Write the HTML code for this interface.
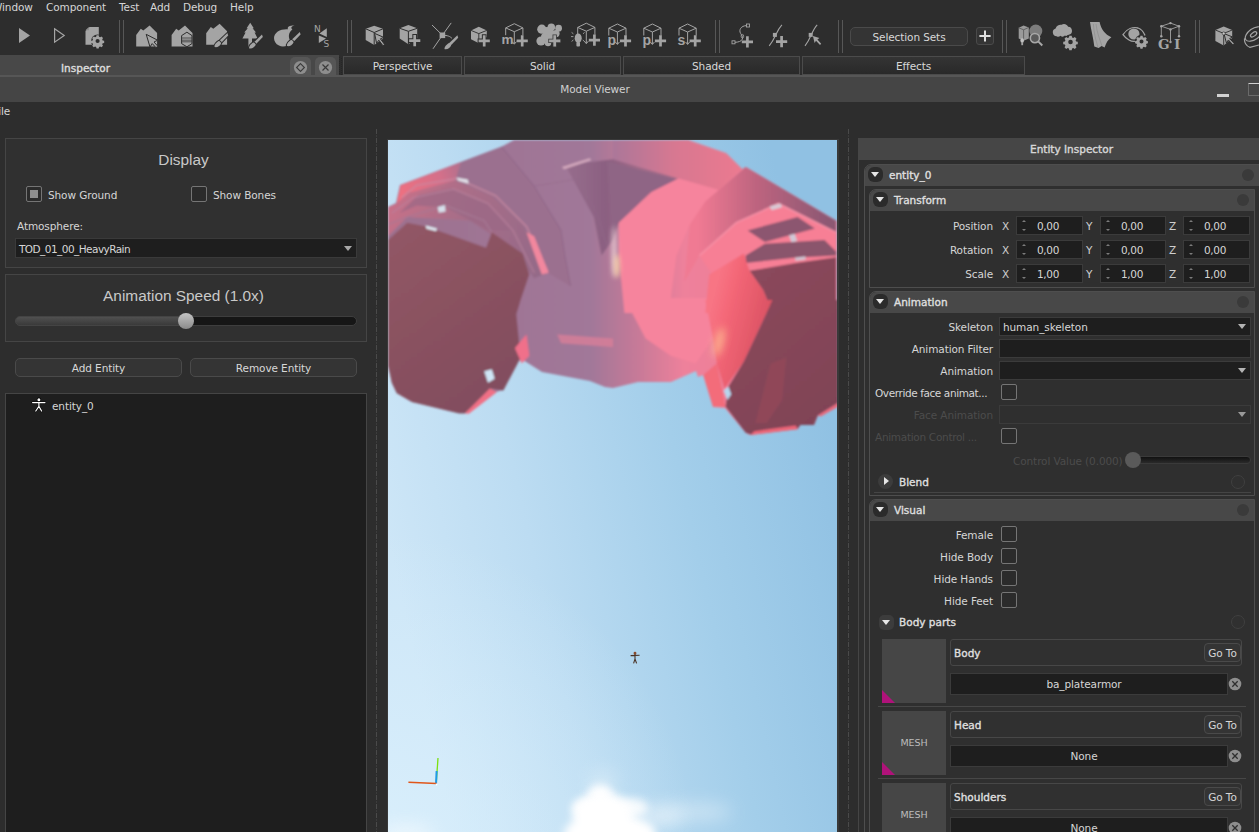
<!DOCTYPE html>
<html><head><meta charset="utf-8"><title>Model Viewer</title>
<style>
*{box-sizing:border-box;margin:0;padding:0}
html,body{width:1259px;height:832px;overflow:hidden;background:#2d2d2d}
body{position:relative;font-family:"DejaVu Sans","Liberation Sans",sans-serif;font-size:10.5px;letter-spacing:-0.1px;color:#d6d6d6;line-height:14px}
.a{position:absolute}
.t{position:absolute;white-space:nowrap;line-height:14px;height:14px}
.c{text-align:center}
.r{text-align:right}
.b{-webkit-text-stroke:0.4px currentColor;letter-spacing:0px}
.sep{position:absolute;top:20px;height:33px;width:5px;border-left:1px solid #575757;border-right:1px solid #575757}
.tab{position:absolute;top:56px;height:19px;border:1px solid #4b4b4b;background:linear-gradient(#343434,#292929);text-align:center;line-height:19px;color:#d8d8d8}
.gb{position:absolute;border:1px solid #454545;background:#303030}
.cb{position:absolute;width:16px;height:16px;border:1px solid #757575;border-radius:2px;background:#2b2b2b}
.btn{position:absolute;border:1px solid #4a4a4a;border-radius:5px;background:#343434;text-align:center;color:#d8d8d8}
.ico{position:absolute;overflow:visible}
</style></head><body>

<!-- ===== menu bar ===== -->
<div id="menubar" class="a" style="left:0;top:0;width:1259px;height:16px">
<span class="t" style="left:-8px;top:0">Window</span>
<span class="t" style="left:46px;top:0">Component</span>
<span class="t" style="left:119px;top:0">Test</span>
<span class="t" style="left:150px;top:0">Add</span>
<span class="t" style="left:183px;top:0">Debug</span>
<span class="t" style="left:230px;top:0">Help</span>
</div>

<!-- ===== toolbar ===== -->
<div id="toolbar" class="a" style="left:0;top:16px;width:1259px;height:39px">
<div class="sep" style="left:119px;top:4px"></div>
<div class="sep" style="left:347px;top:4px"></div>
<div class="sep" style="left:715px;top:4px"></div>
<div class="sep" style="left:838px;top:4px"></div>
<div class="sep" style="left:1002px;top:4px"></div>
<div class="sep" style="left:1195px;top:4px"></div>
<div class="btn" style="left:850px;top:11px;width:118px;height:19px;line-height:19px">Selection Sets</div>
<div class="btn" style="left:976px;top:11px;width:18px;height:18px;border-radius:3px"></div>
<svg class="a" style="left:0;top:-16px" width="1259" height="56" viewBox="0 0 1259 56" fill="#a4a4a4" stroke="none" font-family="'DejaVu Sans','Liberation Sans',sans-serif">
<defs>
<g id="house"><polygon points="0,21 0,9.5 4.6,3.3 7.1,5 13.4,0 20.9,7.5 20.9,21"/></g>
<g id="brush"><path d="M11.8 -0.6 L12.6 2 L4.9 10 L2.9 8 Z"/><path d="M-3.8 0 C-3.4 -2 1.6 -2.6 3.4 -1.6 C4 -0.6 4 0.6 3.4 1.6 C1.6 2.6 -2 2.4 -3.8 0 Z" transform="translate(1.9 10.9) rotate(-42)"/></g>
<g id="plus"><path d="M-1.35 -5.6h2.7v4.25h4.25v2.7h-4.25v4.25h-2.7v-4.25h-4.25v-2.7h4.25z"/></g>
<g id="wcube" fill="none" stroke="#a4a4a4" stroke-width="1"><path d="M0 0 L8.6 4.2 L0 8 L-8.6 4.2 Z"/><path d="M-8.6 4.2 V11.5 M8.6 4.2 V11.5 M0 8 V20"/><path d="M-2 18 L0 20.5 L2 18" /></g>
<g id="gear"><path fill-rule="evenodd" d="M-1.2 -6.3h2.4l.4 1.7 1.2.5 1.5-.9 1.7 1.7-.9 1.5.5 1.2 1.7.4v2.4l-1.7.4-.5 1.2.9 1.5-1.7 1.7-1.5-.9-1.2.5-.4 1.7h-2.4l-.4-1.7-1.2-.5-1.5.9-1.7-1.7.9-1.5-.5-1.2-1.7-.4v-2.4l1.7-.4.5-1.2-.9-1.5 1.7-1.7 1.5.9 1.2-.5zM0-2.3a2.3 2.3 0 1 0 0 4.6 2.3 2.3 0 0 0 0-4.6z"/></g>
<g id="cursor"><path d="M0 0 L9 3.6 L5.6 5.2 L9.6 9.4 L8.2 10.8 L4.2 6.6 L2.6 10 Z"/></g>
</defs>
<!-- play -->
<polygon points="19,28 30,35.5 19,43"/>
<polygon points="54.6,28.8 64.2,35.5 54.6,42.2" fill="none" stroke="#a4a4a4" stroke-width="1.2"/>
<!-- file gear -->
<path d="M89.5 27 H98.8 V36 L93 41 L93 44.8 H85.5 V31 Z"/>
<path d="M85.5 30.2 L88.8 27 V30.2 Z" fill="#8a8a8a"/>
<circle cx="97.6" cy="41" r="6.6" fill="#2d2d2d"/>
<use href="#gear" transform="translate(97.6 41) scale(.9)"/>
<!-- house + cursor -->
<use href="#house" x="136.2" y="25.4"/>
<path d="M146.2 34.3 L157.6 40.2 L154 42 L158 46.4 L156 47.6 L152.2 43.6 L150 47 Z" fill="#a4a4a4" stroke="#2d2d2d" stroke-width="1"/>
<!-- house + hex -->
<use href="#house" x="171.6" y="25.4"/>
<polygon points="186.9,32.2 192,35.6 192,43.6 186.9,46.8 181.6,43.6 181.6,35.6" fill="#a4a4a4" stroke="#2d2d2d" stroke-width="1"/>
<path d="M181.6 38h10.4M181.6 40.2h10.4M181.6 41.8h10.4" stroke="#3a3a3a" stroke-width=".8"/>
<!-- house + brush -->
<use href="#house" x="206.2" y="23.8"/>
<g stroke="#2d2d2d" stroke-width="2" paint-order="stroke"><use href="#brush" x="215.6" y="33.6"/></g>
<!-- tree + brush -->
<path d="M250.2 22.8 L253.8 28.2 L252.6 28.2 L256 32.6 L254.6 32.6 L257.6 38.6 L252 38.6 L252 47 L248.4 47 L248.4 38.6 L242.4 38.6 L245.6 32.6 L244.2 32.6 L247.8 28.2 L246.6 28.2 Z"/>
<g stroke="#2d2d2d" stroke-width="2" paint-order="stroke"><use href="#brush" x="250.2" y="35"/></g>
<!-- blob + brush -->
<path d="M274 38 C274 32 281 28.6 288 29.2 C287 27 289 25.6 294.6 25.2 C291 26.4 290.6 27.6 292.4 29.6 C288 33 288 38 291 42 C289 46 283 47.6 279 45.6 C275.6 44 274 41 274 38 Z"/>
<g stroke="#2d2d2d" stroke-width="2" paint-order="stroke"><use href="#brush" x="288" y="32.6"/></g>
<!-- N/S -->
<text x="314" y="31.6" font-size="9" fill="#a4a4a4">N</text>
<polygon points="326.8,28.2 326.8,37 319.4,33.6"/>
<polygon points="318.8,35.4 318.8,43 326,38.4"/>
<text x="323.4" y="46.8" font-size="9" fill="#a4a4a4">S</text>
<!-- cube cursor -->
<polygon points="374.2,25.7 383,28.8 383,38.8 374.2,45 365.7,40 365.7,28.8"/>
<path d="M365.7 28.8 L374.2 32.5 L383 28.8 M374.2 32.5 V45" stroke="#2d2d2d" stroke-width="1" fill="none"/>
<g stroke="#2d2d2d" stroke-width="1"><path d="M374.6 33.4 L383.8 37.4 L380.4 38.8 L384.6 44.4 L383 45.8 L378.8 40.2 L376.6 43.4 Z"/></g>
<!-- cube plus -->
<polygon points="408.4,25 417.2,28.3 417.2,38 408.4,44.2 399.7,38.5 399.7,28.3"/>
<path d="M399.7 28.3 L408.4 31.3 L417.2 28.3 M408.4 31.3 V44.2" stroke="#2d2d2d" stroke-width="1" fill="none"/>
<g stroke="#2d2d2d" stroke-width="2" paint-order="stroke"><use href="#plus" x="414.7" y="40.6"/></g>
<!-- node brush -->
<path d="M442.4 35.2 L432 25 M442.4 35.2 L451.2 22.9 M442.4 35.2 L433 48.8 M442.4 35.2 C448 35.4 450 36.4 452 38.4" stroke="#a4a4a4" stroke-width="1" fill="none"/>
<rect x="439.6" y="32.5" width="5.6" height="5.6"/>
<use href="#brush" x="445.6" y="35.8"/>
<!-- small cube plus -->
<polygon points="478.8,26.7 486.8,30.4 486.8,37 478.8,43.3 471,39.2 471,30.4"/>
<path d="M471 30.4 L478.8 33.6 L486.8 30.4 M478.8 33.6 V43.3" stroke="#2d2d2d" stroke-width=".9" fill="none"/>
<g stroke="#2d2d2d" stroke-width="2" paint-order="stroke"><use href="#plus" x="484.2" y="40.8"/></g>
<!-- m + -->
<use href="#wcube" x="514.3" y="23.7"/>
<text x="501.6" y="43.8" font-size="13.5" font-weight="bold" font-family="'Liberation Sans',sans-serif" fill="#a4a4a4">m</text>
<use href="#plus" x="522.2" y="40.8"/>
<!-- splat -->
<g><circle cx="541.8" cy="29.2" r="4.6"/><circle cx="551.3" cy="27.2" r="3.8"/><circle cx="558.6" cy="28.2" r="3.4"/><circle cx="541" cy="41" r="4.6"/><circle cx="548" cy="43" r="3.2"/><circle cx="549" cy="35" r="6.4"/><circle cx="545" cy="37" r="4"/><circle cx="547" cy="31" r="4"/><circle cx="556" cy="33.6" r="3.6"/></g>
<g stroke="#3a3a3a" stroke-width="1.6" paint-order="stroke"><use href="#plus" x="554.7" y="40.8"/></g>
<!-- bulb + -->
<use href="#wcube" x="586.3" y="23.2"/>
<ellipse cx="578.2" cy="38.2" rx="3.5" ry="4.8"/><rect x="576.4" y="42" width="3.6" height="4.6" rx="1"/>
<path d="M571 36.6h2.4M571.6 32.4l1.8 1.4M571.6 41.4l1.8-1.4M584.6 32.4l-1.6 1.4M584.4 41.4l-1.6-1.4" stroke="#a4a4a4" stroke-width=".9"/>
<use href="#plus" x="594.4" y="40.2"/>
<!-- p + -->
<use href="#wcube" x="617.4" y="24"/>
<text x="607.4" y="44.6" font-size="14" font-weight="bold" font-family="'Liberation Sans',sans-serif" fill="#a4a4a4">p</text>
<use href="#plus" x="625.5" y="40.8"/>
<use href="#wcube" x="652.4" y="24"/>
<text x="642.4" y="44.6" font-size="14" font-weight="bold" font-family="'Liberation Sans',sans-serif" fill="#a4a4a4">p</text>
<use href="#plus" x="660.5" y="40.8"/>
<use href="#wcube" x="687.6" y="24"/>
<text x="677.4" y="44.6" font-size="14" font-weight="bold" font-family="'Liberation Sans',sans-serif" fill="#a4a4a4">s</text>
<use href="#plus" x="695.2" y="40.8"/>
<!-- curve + -->
<path d="M746.4 25.6 C741 25.8 738.6 30 740.6 33.4 C742 35.6 743 37 742.4 39 C741.6 41.4 738 42.2 735 42.3" stroke="#a4a4a4" stroke-width="1" fill="none"/>
<rect x="746.5" y="24" width="3" height="3" fill="none" stroke="#a4a4a4" stroke-width=".9"/>
<rect x="732" y="40.8" width="3" height="3" fill="none" stroke="#a4a4a4" stroke-width=".9"/>
<ellipse cx="742.4" cy="36.2" rx="1.3" ry="1.8" fill="none" stroke="#a4a4a4" stroke-width=".8"/>
<use href="#plus" x="747.4" y="41.8"/>
<!-- curve square + -->
<path d="M781.9 24.8 C776 31 776 38 769.2 45.8" stroke="#a4a4a4" stroke-width="1.1" fill="none"/>
<rect x="772.9" y="32.9" width="4" height="4"/>
<use href="#plus" x="781.6" y="41.7"/>
<!-- curve square cursor -->
<path d="M817.2 24.8 C811.4 31 811.4 38 805 45.8" stroke="#a4a4a4" stroke-width="1.1" fill="none"/>
<rect x="808.7" y="32.9" width="4" height="4"/>
<path d="M812.9 36 L819.4 38 L817.4 39.6 L821.2 43.8 L820 45 L816 40.8 L814.6 43 Z"/>
<!-- selection sets plus -->
<path d="M984 30.4h2v4.6h4.6v2h-4.6v4.6h-2v-4.6h-4.6v-2h4.6z" fill="#e0e0e0"/>
<!-- search world -->
<polygon points="1023.6,25.4 1028.8,27.4 1028.8,38.6 1023.6,40.8 1018.7,38.6 1018.7,27.8" fill="#9a9a9a"/>
<path d="M1018.7 27.8 L1023.6 29.8 L1028.8 27.4 M1023.6 29.8 V40.8" stroke="#555" stroke-width=".8" fill="none"/>
<circle cx="1035.8" cy="31.1" r="6.5" fill="#7c7c7c"/>
<circle cx="1034.9" cy="38.1" r="4.6" fill="#5a5a5a" stroke="#a8a8a8" stroke-width="1.6"/>
<path d="M1038.4 41.6 L1042.3 45.5" stroke="#a8a8a8" stroke-width="2"/>
<ellipse cx="1022.2" cy="40.6" rx="1.8" ry="2.4" fill="#c0c0c0"/><rect x="1021.3" y="42.6" width="1.8" height="2.6" fill="#a4a4a4"/>
<!-- cloud gear -->
<path d="M1056.6 36.2 a4 4 0 0 1 -1 -7.8 a5 5 0 0 1 6 -3.6 a4.6 4.6 0 0 1 6.6 2 a4.2 4.2 0 0 1 0.8 8.2 a3 3 0 0 1 -4 .6 a3.4 3.4 0 0 1 -4.6 .2 a3 3 0 0 1 -3.8 .4z"/>
<circle cx="1070.5" cy="42" r="7.4" fill="#2d2d2d"/>
<use href="#gear" x="1070.5" y="42"/>
<!-- cloth -->
<path d="M1090 22 L1099.6 22 C1101 29 1105 34.4 1111.4 37.2 C1108 39.6 1106 43 1104.6 47.6 L1101.6 46 L1098.6 48 L1094.3 46.4 C1093.4 38 1091 30 1090 22 Z"/>
<path d="M1096 24 C1097 33 1100 40 1102 46 M1093.4 24 C1094 34 1096 41 1098 47" stroke="#8c8c8c" stroke-width=".7" fill="none"/>
<!-- eye gear -->
<path d="M1123 34.6 C1127 28.6 1133 26.6 1138 28 C1141 29 1143.4 31.6 1144.8 35 C1141 41 1134 43 1129 40 C1126.4 38.6 1124.4 36.6 1123 34.6 Z" fill="none" stroke="#a4a4a4" stroke-width="1.3"/>
<circle cx="1133.9" cy="34" r="5.6"/>
<circle cx="1141.5" cy="41.4" r="6.6" fill="#2d2d2d"/>
<use href="#gear" transform="translate(1141.5 41.4) scale(.88)"/>
<!-- GI -->
<g fill="none" stroke="#a4a4a4" stroke-width=".9"><path d="M1170.5 23.1 L1179 26.2 L1170.5 29.4 L1161.3 26.2 Z M1161.3 26.2 V36.3 M1179 26.2 V36.3 M1170.5 29.4 V42"/></g>
<g><circle cx="1170.5" cy="23.1" r="1.2"/><circle cx="1179" cy="26.2" r="1.2"/><circle cx="1161.3" cy="26.2" r="1.2"/><circle cx="1170.5" cy="29.4" r="1.2"/><circle cx="1161.3" cy="36.3" r="1.2"/><circle cx="1179" cy="36.3" r="1.2"/><circle cx="1170.5" cy="42" r="1.2"/></g>
<text x="1158" y="49.4" font-size="13.5" font-weight="bold" font-family="'DejaVu Serif','Liberation Serif',serif" fill="#a4a4a4" letter-spacing="4.4">GI</text>
<!-- cube cursor 2 -->
<polygon points="1223.7,26.6 1232.2,30 1232.2,38 1223.7,45.5 1215.4,40.9 1215.4,30"/>
<path d="M1215.4 30 L1223.7 33.4 L1232.2 30 M1223.7 33.4 V45.5" stroke="#2d2d2d" stroke-width=".9" fill="none"/>
<g stroke="#2d2d2d" stroke-width="1"><path d="M1224 33.6 L1232.6 37 L1229.6 38.6 L1234.2 43.4 L1232.8 44.8 L1228.4 40 L1226.4 43 Z"/></g>
<circle cx="1223.7" cy="33.4" r="1.5" fill="#c8c8c8" stroke="#2d2d2d" stroke-width=".6"/>
<!-- tape -->
<g fill="none" stroke="#a4a4a4" stroke-width="1.2"><ellipse cx="1254" cy="34" rx="10" ry="5.4" transform="rotate(-35 1254 34)"/><ellipse cx="1253.6" cy="34.4" rx="3.6" ry="1.8" transform="rotate(-35 1253.6 34.4)"/><path d="M1244.6 38.4 C1244 42 1246 46 1250 47.4 L1259 45"/></g>
</svg>

</div>

<!-- ===== dock/tab bars ===== -->
<div class="a" style="left:0;top:55px;width:1259px;height:47px;background:#454545"></div>
<div class="a" style="left:0;top:55px;width:339px;height:20px;background:#484848"></div>
<div class="a" style="left:339px;top:55px;width:920px;height:20px;background:#2d2d2d"></div>
<div class="a" style="left:0;top:75px;width:1259px;height:2px;background:#565656"></div>
<div class="a" style="left:290px;top:57px;width:21px;height:18px;background:#565656;border-radius:5px 5px 0 0"></div>
<div class="a" style="left:315px;top:57px;width:21px;height:18px;background:#565656;border-radius:5px 5px 0 0"></div>
<svg class="a" style="left:290px;top:57px" width="46" height="20" viewBox="0 0 46 20"><circle cx="10.5" cy="10.5" r="6.6" fill="#8e8e8e"/><path d="M10.5 6.6L14.4 10.5L10.5 14.4L6.6 10.5Z" fill="none" stroke="#3a3a3a" stroke-width="1.1"/><circle cx="35.5" cy="10.5" r="6.6" fill="#8e8e8e"/><path d="M32.5 7.5L38.5 13.5M38.5 7.5L32.5 13.5" stroke="#3a3a3a" stroke-width="1.2"/></svg>
<svg class="a" style="left:339px;top:57px" width="3" height="18" viewBox="0 0 3 18"><path d="M.5 0V18M2.5 1V18" stroke="#262626" stroke-width="1" stroke-dasharray="1 1"/></svg>
<div class="a" style="left:1217px;top:94px;width:12px;height:2.5px;background:#d2d2d2"></div>
<div class="a" style="left:1248px;top:83px;width:14px;height:13px;border:1px solid #6a6a6a;border-top:1px solid #cfcfcf;border-radius:1px"></div>
<div class="t b" style="left:61px;top:61px;color:#dcdcdc">Inspector</div>
<div class="tab" style="left:343px;width:119px">Perspective</div>
<div class="tab" style="left:464px;width:157px">Solid</div>
<div class="tab" style="left:623px;width:177px">Shaded</div>
<div class="tab" style="left:802px;width:223px">Effects</div>
<div class="t c" style="left:495px;width:200px;top:82px;color:#d0d0d0">Model Viewer</div>
<div class="t" style="left:-7px;top:104px">File</div>

<!-- ===== left panel ===== -->
<div id="left" class="a" style="left:0;top:102px;width:376px;height:730px">
<div class="gb" style="left:5px;top:36px;width:362px;height:130px"></div>
<div class="t c" style="left:2.5px;width:362px;top:51px;font-family:'Liberation Sans',sans-serif;font-size:15.4px;letter-spacing:0;color:#c9c9c9">Display</div>
<div class="cb" style="left:26px;top:84px"><div class="a" style="left:3px;top:3px;width:8px;height:8px;background:#8e8e8e"></div></div>
<div class="t" style="left:48px;top:86px">Show Ground</div>
<div class="cb" style="left:191px;top:84px"></div>
<div class="t" style="left:213px;top:86px">Show Bones</div>
<div class="t" style="left:17px;top:117px">Atmosphere:</div>
<div class="a" style="left:15px;top:136px;width:342px;height:20px;background:#1e1e1e;border:1px solid #3a3a3a"></div>
<div class="t" style="left:19px;top:140px;letter-spacing:-0.55px">TOD_01_00_HeavyRain</div>
<div class="a" style="left:344px;top:144px;width:0;height:0;border-left:4.5px solid transparent;border-right:4.5px solid transparent;border-top:5px solid #a8a8a8"></div>

<div class="gb" style="left:5px;top:172px;width:362px;height:68px"></div>
<div class="t c" style="left:2.5px;width:362px;top:187px;font-family:'Liberation Sans',sans-serif;font-size:15.4px;letter-spacing:0;color:#c9c9c9">Animation Speed (1.0x)</div>
<div class="a" style="left:15px;top:214px;width:342px;height:10px;border-radius:5px;background:#161616;border:1px solid #3e3e3e"></div>
<div class="a" style="left:15px;top:214px;width:172px;height:10px;border-radius:5px 0 0 5px;background:linear-gradient(#505050,#3a3a3a);border:1px solid #444"></div>
<div class="a" style="left:178px;top:211px;width:16px;height:16px;border-radius:8px;background:linear-gradient(#c4c4c4,#8a8a8a)"></div>

<div class="btn" style="left:15px;top:256px;width:167px;height:19px;line-height:19px">Add Entity</div>
<div class="btn" style="left:190px;top:256px;width:167px;height:19px;line-height:19px">Remove Entity</div>
<div class="a" style="left:5px;top:291px;width:362px;height:445px;background:#1e1e1e;border:1px solid #454545"></div>
<svg class="a" style="left:30px;top:295px" width="18" height="18" viewBox="30 397 18 18"><g stroke="#000" stroke-width="2.2" stroke-linecap="round" fill="none"><circle cx="38.9" cy="399.8" r="1.1"/><path d="M32.6 402.6H45M38.9 403V406.4L35.8 411M38.9 406.4L41.6 411"/></g><g stroke="#fff" stroke-width="1.2" stroke-linecap="round" fill="none"><circle cx="38.9" cy="399.8" r=".9" fill="#fff"/><path d="M32.6 402.6H45M38.9 403V406.4L35.8 411M38.9 406.4L41.6 411"/></g></svg>
<div class="t" style="left:52px;top:297px">entity_0</div>
</div>

<!-- ===== viewport ===== -->
<svg class="a" style="left:376px;top:129px" width="1" height="703" viewBox="0 0 1 703"><path d="M.5 0V703" stroke="#4a4a4a" stroke-width="1" stroke-dasharray="5 1.5 1 1.5"/></svg>
<svg class="a" style="left:848px;top:129px" width="1" height="703" viewBox="0 0 1 703"><path d="M.5 0V703" stroke="#4a4a4a" stroke-width="1" stroke-dasharray="5 1.5 1 1.5"/></svg>
<div class="a" style="left:386.5px;top:138.5px;width:452px;height:700px;background:#393939"></div>
<div id="vp" class="a" style="left:388px;top:140px;width:449px;height:692px;overflow:hidden">
<svg class="a" style="left:0;top:0" width="449" height="692" viewBox="0 0 449 692">
<defs>
<filter id="bl" x="-5%" y="-5%" width="110%" height="110%"><feGaussianBlur stdDeviation="0.9"/></filter>
<filter id="blf" x="-30%" y="-30%" width="160%" height="160%"><feGaussianBlur stdDeviation="0.35"/></filter>
<filter id="bl2" filterUnits="userSpaceOnUse" x="-40" y="-40" width="530" height="780"><feGaussianBlur stdDeviation="2.5"/></filter>
<filter id="bl3" filterUnits="userSpaceOnUse" x="-40" y="-40" width="530" height="780"><feGaussianBlur stdDeviation="4"/></filter>
<filter id="bl8" filterUnits="userSpaceOnUse" x="-40" y="-40" width="530" height="780"><feGaussianBlur stdDeviation="9"/></filter>
<filter id="bl16" filterUnits="userSpaceOnUse" x="-40" y="-40" width="530" height="780"><feGaussianBlur stdDeviation="18"/></filter>
<linearGradient id="gBase" gradientUnits="userSpaceOnUse" x1="0" y1="0" x2="449" y2="0"><stop offset="0" stop-color="#9d718f"/><stop offset=".45" stop-color="#a17899"/><stop offset=".56" stop-color="#c87a98"/><stop offset=".66" stop-color="#ee819b"/><stop offset="1" stop-color="#ee7a92"/></linearGradient>
<linearGradient id="gTop" gradientUnits="userSpaceOnUse" x1="225" y1="0" x2="350" y2="0"><stop offset="0" stop-color="#ab7799"/><stop offset=".5" stop-color="#d87891"/><stop offset="1" stop-color="#ea7a90"/></linearGradient>
<linearGradient id="gL" gradientUnits="userSpaceOnUse" x1="0" y1="90" x2="130" y2="270"><stop offset="0" stop-color="#925766"/><stop offset=".5" stop-color="#895160"/><stop offset="1" stop-color="#804d5e"/></linearGradient>
<linearGradient id="gLu" gradientUnits="userSpaceOnUse" x1="10" y1="50" x2="160" y2="130"><stop offset="0" stop-color="#c87088"/><stop offset=".35" stop-color="#aa6e88"/><stop offset="1" stop-color="#936a88"/></linearGradient>
<linearGradient id="gEdge" gradientUnits="userSpaceOnUse" x1="10" y1="50" x2="80" y2="25"><stop offset="0" stop-color="#ee6f80"/><stop offset=".6" stop-color="#d4708a"/><stop offset="1" stop-color="#a8708e"/></linearGradient>
<linearGradient id="gR" gradientUnits="userSpaceOnUse" x1="340" y1="160" x2="449" y2="290"><stop offset="0" stop-color="#8a485b"/><stop offset="1" stop-color="#7f4356"/></linearGradient>
<linearGradient id="gRu" gradientUnits="userSpaceOnUse" x1="310" y1="60" x2="440" y2="60"><stop offset="0" stop-color="#f07a93"/><stop offset=".45" stop-color="#bd647f"/><stop offset="1" stop-color="#8d5873"/></linearGradient>
<linearGradient id="gCor" gradientUnits="userSpaceOnUse" x1="315" y1="200" x2="375" y2="215"><stop offset="0" stop-color="#f87484"/><stop offset=".3" stop-color="#f36676"/><stop offset="1" stop-color="#d95162"/></linearGradient>
<linearGradient id="gV" gradientUnits="userSpaceOnUse" x1="170" y1="0" x2="250" y2="0"><stop offset="0" stop-color="#99708f"/><stop offset=".6" stop-color="#8b6081"/><stop offset="1" stop-color="#a06a88"/></linearGradient>
<radialGradient id="gSky2" gradientUnits="userSpaceOnUse" cx="-20" cy="720" r="330"><stop offset="0" stop-color="#dcf1fd" stop-opacity=".8"/><stop offset="1" stop-color="#dcf1fd" stop-opacity="0"/></radialGradient>
<linearGradient id="gSky" gradientUnits="userSpaceOnUse" x1="0" y1="400" x2="449" y2="300"><stop offset="0" stop-color="#cde6f7"/><stop offset=".3" stop-color="#bcdcf2"/><stop offset=".65" stop-color="#a3ceea"/><stop offset="1" stop-color="#90c1e3"/></linearGradient>
</defs>
<rect width="449" height="692" fill="url(#gSky)"/>
<rect width="449" height="692" fill="url(#gSky2)"/>
<g filter="url(#bl)">
<polygon fill="url(#gBase)" points="126,0 113,7 73,22 12,45 8,63 0,67 0,225 4,243 9,253 24,262 71,273 77,273 108,252 115,250 127,221 135,220 154,232 202,241 217,247 225,248 250,242 283,242 308,231 310,237 315,235 325,267 337,268 358,293 362,295 410,289 412,285 426,285 430,275 449,263 449,81 358,27 354,29 338,13 300,0"/>
<polygon points="12.5,45.2 73.1,22.1 86.5,32.7 67.3,41.3 21.2,52.9 8.7,63.5" fill="url(#gEdge)" />
<polygon points="73.1,22.1 113.5,6.7 146.2,46.2 173.1,90.4 176.9,115.4 182.7,146.2 159.6,132.7 134.6,84.6 103.8,55.8 67.3,40.4" fill="#9b708f" />
<polygon points="225.0,0.0 300.0,0.0 338.5,13.5 353.8,28.8 330.8,50.0 290.4,38.5 225.0,19.2" fill="url(#gTop)" />
<polygon points="176.9,25.0 225.0,19.2 290.4,38.5 263.5,51.9 230.8,82.7 225.0,100.0 213.5,115.4 205.8,76.9" fill="url(#gV)" />
<polygon points="219.2,21.2 288.5,39.4 261.5,52.9 230.8,82.7 223.1,92.3" fill="#8f6585" />
<polygon points="263.5,51.9 290.4,38.5 330.8,50.0 317.3,61.5 301.9,84.6 288.5,115.4 280.8,173.1 236.5,173.1 230.8,115.4 230.8,82.7" fill="#f6849d" />
<polygon points="236.2,158.1 340.4,158.1 325.0,198.5 307.7,223.5 282.7,215.8 257.7,198.5" fill="#f6849d" />
<polygon points="0.0,67.3 8.7,63.5 21.2,52.9 67.3,40.4 103.8,55.8 134.6,84.6 159.6,132.7 146.2,138.5 123.1,107.7 82.7,80.8 19.2,76.9 0.0,96.2" fill="url(#gLu)" />
<polygon points="11.5,73.1 30.8,54.8 63.5,48.1 100.0,63.5 123.1,90.4 100.0,90.4 57.7,67.3 28.8,65.4" fill="#9a6886" opacity=".7"/>
<polygon points="0.0,100.0 19.2,82.7 38.5,86.5 98.1,107.7 103.8,92.3 134.6,113.5 141.3,134.6 132.7,160.0 128.8,173.1 0.0,173.1" fill="url(#gL)" />
<polygon points="0.0,158.1 129.2,158.1 128.5,175.4 132.7,217.7 115.4,250.4 101.9,248.5 76.9,273.5 71.2,273.5 24.0,261.9 8.7,253.3 3.8,242.7 0.0,225.4" fill="url(#gL)" />
<polygon points="76.9,273.5 101.9,248.5 108.7,252.3 80.8,273.8" fill="#f07085" />
<polygon points="126.9,208.1 138.5,194.6 141.3,215.8 133.7,223.5" fill="#f0708a" />
<polygon points="357.7,26.9 448.1,80.8 448.1,92.3 390.4,63.5 348.1,82.7 311.5,115.4 296.2,142.3 301.9,84.6 317.3,61.5 330.8,50.0" fill="url(#gRu)" />
<polygon points="348.1,82.7 390.4,63.5 448.1,92.3 448.1,173.1 359.6,173.1 323.1,132.7 311.5,115.4" fill="#f77f95" />
<polygon points="359.6,90.4 409.6,76.9 426.9,88.5 376.9,101.9" fill="#8c5670" />
<polygon points="357.7,115.4 376.9,103.8 436.5,100.0 448.1,111.5 448.1,115.4 405.8,117.7 357.7,123.1" fill="#8a546c" />
<polygon points="361.5,130.8 407.7,123.1 448.1,117.3 448.1,173.1 384.6,173.1 375.0,150.0" fill="url(#gR)" />
<polygon points="321.2,134.6 355.8,113.5 361.5,130.8 375.0,150.0 384.6,173.1 317.3,173.1" fill="url(#gCor)" />
<polygon points="317.3,160.0 384.6,160.0 355.8,221.5 336.5,248.5 328.8,223.5 325.0,198.5" fill="url(#gCor)" />
<polygon points="315.4,235.0 328.8,223.5 337.5,266.7 325.0,266.7" fill="#f36c7a" />
<polygon points="384.6,160.0 450.0,160.0 450.0,262.9 429.8,275.4 426.0,285.0 412.5,285.0 409.6,288.8 362.5,294.6 357.7,292.7 337.5,266.7 340.4,246.5 355.8,221.5" fill="url(#gR)" />
<polygon points="382.7,223.5 398.1,217.7 394.2,260.0 378.8,283.1 367.3,283.1" fill="#96485a" opacity=".7"/>
<polygon points="362.5,295.0 409.6,289.2 407.7,285.4 366.3,291.2" fill="#ee6678" />
<polygon points="429.8,275.4 450.0,262.9 450.0,266.7 432.7,276.5" fill="#ee6678" />
<polygon points="169.2,194.6 225.0,198.5 225.0,207.1 173.1,203.3" fill="#d87e98" opacity=".8"/>
<g fill="none" stroke-linejoin="round">
<path d="M13.5 57.7 L28.8 45.2 L69.2 38.5 L107.7 55.8 L138.5 86.5 L159.6 130.8" stroke="#c98aa0" stroke-width="1.6" opacity="0.8"/>
<path d="M3.8 73.1 L25.0 57.7 L65.4 49.0 L100.0 63.5 L125.0 90.4 L146.2 132.7" stroke="#b9829c" stroke-width="1.4" opacity="0.7"/>
<path d="M0.0 84.6 L19.2 76.9 L57.7 65.4 L96.2 80.8 L103.8 92.3" stroke="#a87a96" stroke-width="1.6" opacity="0.7"/>
<path d="M113.5 6.7 L146.2 46.2 L173.1 90.4 L176.9 115.4 L182.7 146.2" stroke="#8d6787" stroke-width="1.2" opacity="0.7"/>
<path d="M146.2 46.2 L192.3 38.5 L211.5 80.8 L219.2 107.7" stroke="#93698a" stroke-width="1.0" opacity="0.6"/>
<path d="M311.5 115.4 L348.1 82.7 L390.4 63.5 L448.1 92.3" stroke="#fa9aae" stroke-width="1.4" opacity="0.8"/>
</g>
<polygon points="49.6,66.9 56.9,65.0 57.7,71.5 50.8,72.7" fill="#d5dfea" />
<polygon points="37.5,85.6 49.0,88.5 48.1,91.3 38.5,88.8" fill="#dfeaf3" />
<polygon points="68.3,37.5 79.8,39.4 80.8,43.8 70.2,40.8" fill="#e0dfe8" />
<polygon points="174.0,26.9 201.9,18.3 203.1,20.2 176.0,29.2" fill="#d4a9bd" />
<polygon points="138.5,92.3 146.2,96.2 160.6,132.7 153.8,134.6" fill="#f2879e" />
<polygon points="96.2,231.2 103.8,229.2 106.7,238.8 100.0,242.7" fill="#cfe6f6" />
<polygon points="335.6,250.4 340.4,246.5 343.3,254.2 339.4,260.0" fill="#b5d6ee" />
<polygon points="381.7,66.3 392.3,63.5 394.2,67.3 383.7,70.2" fill="#d8c8d4" />
<polygon points="401.0,95.2 406.7,93.8 409.2,101.0 403.5,102.3" fill="#d0c8d6" />
<polygon points="406.7,117.7 417.3,116.3 417.9,119.6 407.7,120.8" fill="#cfc3d0" />
</g>
<ellipse cx="226" cy="112" rx="2.2" ry="26" fill="#f3dde0" opacity=".85" filter="url(#bl2)"/>
<ellipse cx="229" cy="126" rx="2.5" ry="12" fill="#ffd9a8" opacity=".9" filter="url(#bl2)"/>
<ellipse cx="331" cy="202" rx="4" ry="15" fill="#ffc896" opacity=".85" filter="url(#bl3)" transform="rotate(14 331 202)"/>
<g fill="#fff">
<ellipse cx="215" cy="676" rx="30" ry="24" filter="url(#bl3)"/>
<ellipse cx="222" cy="694" rx="46" ry="20" filter="url(#bl3)"/>
<ellipse cx="212" cy="654" rx="12" ry="10" opacity=".95" filter="url(#bl3)"/>
<ellipse cx="196" cy="668" rx="12" ry="9" opacity=".9" filter="url(#bl3)"/>
<ellipse cx="244" cy="668" rx="16" ry="10" opacity=".85" filter="url(#bl3)"/>
<ellipse cx="272" cy="676" rx="22" ry="9" opacity=".6" filter="url(#bl8)"/>
<ellipse cx="310" cy="672" rx="34" ry="7" opacity=".45" filter="url(#bl8)"/>
<ellipse cx="215" cy="640" rx="14" ry="8" opacity=".35" filter="url(#bl8)"/>
<ellipse cx="18" cy="694" rx="28" ry="8" opacity=".6" filter="url(#bl8)"/>
</g>
<g stroke-linecap="butt" fill="none"><path d="M48.2 644 L50 618" stroke="#7be010" stroke-width="1.3"/><path d="M48 644.5 L48.6 631" stroke="#1f9be8" stroke-width="2"/><path d="M48.6 643.6 L20.4 642.2" stroke="#e0561a" stroke-width="1.5"/><circle cx="48.4" cy="644.6" r="1" fill="#fff"/></g>
<g stroke="#4a3326" stroke-width="1.1" fill="none" filter="url(#blf)"><path d="M242.6 515.6 L251.6 515.2 M247 513.6 V519 L245.6 523.4 M247 519 L248.6 523.4"/><circle cx="247" cy="513.2" r=".9" fill="#8a4a2a" stroke="#8a4a2a"/></g>
</svg>
</div>

<!-- ===== right panel ===== -->
<div id="right" class="a" style="left:858px;top:138px;width:401px;height:694px;background:#2e2e2e">
<div class="a" style="left:0;top:0;width:1px;height:694px;background:#454545"></div>
<div class="a" style="left:0;top:0;width:401px;height:22px;background:#464646"></div>
<div class="t c b" style="left:0;width:427px;top:4px">Entity Inspector</div>
<div class="a" style="left:6px;top:26px;width:400px;height:700px;background:#2f2f2f;border:1px solid #4e4e4e;border-radius:7px 0 0 0"></div>
<div class="a" style="left:7px;top:27px;width:398px;height:21px;background:#484848;border-radius:6px 0 0 0"></div>
<div class="a" style="left:10px;top:29px;width:15px;height:15px;background:#2b2b2b;border-radius:6px"></div>
<div class="a" style="left:13.0px;top:34.0px;width:0;height:0;border-left:4.5px solid transparent;border-right:4.5px solid transparent;border-top:5px solid #e6e6e6"></div>
<div class="t b" style="left:31px;top:30px;color:#dedede">entity_0</div>
<div class="a" style="left:384px;top:30.5px;width:12px;height:12px;border-radius:6px;background:#3a3a3a"></div>
<div class="a" style="left:11px;top:51px;width:386px;height:99px;background:#2f2f2f;border:1px solid #4e4e4e;border-radius:7px 0 0 0"></div>
<div class="a" style="left:12px;top:52px;width:384px;height:21px;background:#484848;border-radius:6px 0 0 0"></div>
<div class="a" style="left:15px;top:54px;width:15px;height:15px;background:#2b2b2b;border-radius:6px"></div>
<div class="a" style="left:18.0px;top:59.0px;width:0;height:0;border-left:4.5px solid transparent;border-right:4.5px solid transparent;border-top:5px solid #e6e6e6"></div>
<div class="t b" style="left:36px;top:55px;color:#dedede">Transform</div>
<div class="a" style="left:379px;top:55.5px;width:12px;height:12px;border-radius:6px;background:#3a3a3a"></div>
<div class="t r" style="left:-65px;width:200px;top:80.5px;">Position</div>
<div class="t " style="left:144px;top:80.5px;color:#cfcfcf">X</div>
<div class="a" style="left:158px;top:78px;width:67px;height:19px;background:#1e1e1e;border:1px solid #3b3b3b"></div>
<div class="a" style="left:163.5px;top:81.5px;width:0;height:0;border-left:2.5px solid transparent;border-right:2.5px solid transparent;border-bottom:2.5px solid #7c7c7c"></div>
<div class="a" style="left:163.5px;top:90.5px;width:0;height:0;border-left:2.5px solid transparent;border-right:2.5px solid transparent;border-top:2.5px solid #7c7c7c"></div>
<div class="t " style="left:179px;top:80.5px;letter-spacing:-0.35px">0,00</div>
<div class="t " style="left:228px;top:80.5px;color:#cfcfcf">Y</div>
<div class="a" style="left:242px;top:78px;width:66px;height:19px;background:#1e1e1e;border:1px solid #3b3b3b"></div>
<div class="a" style="left:247.5px;top:81.5px;width:0;height:0;border-left:2.5px solid transparent;border-right:2.5px solid transparent;border-bottom:2.5px solid #7c7c7c"></div>
<div class="a" style="left:247.5px;top:90.5px;width:0;height:0;border-left:2.5px solid transparent;border-right:2.5px solid transparent;border-top:2.5px solid #7c7c7c"></div>
<div class="t " style="left:263px;top:80.5px;letter-spacing:-0.35px">0,00</div>
<div class="t " style="left:311px;top:80.5px;color:#cfcfcf">Z</div>
<div class="a" style="left:325px;top:78px;width:67px;height:19px;background:#1e1e1e;border:1px solid #3b3b3b"></div>
<div class="a" style="left:330.5px;top:81.5px;width:0;height:0;border-left:2.5px solid transparent;border-right:2.5px solid transparent;border-bottom:2.5px solid #7c7c7c"></div>
<div class="a" style="left:330.5px;top:90.5px;width:0;height:0;border-left:2.5px solid transparent;border-right:2.5px solid transparent;border-top:2.5px solid #7c7c7c"></div>
<div class="t " style="left:346px;top:80.5px;letter-spacing:-0.35px">0,00</div>
<div class="t r" style="left:-65px;width:200px;top:104.5px;">Rotation</div>
<div class="t " style="left:144px;top:104.5px;color:#cfcfcf">X</div>
<div class="a" style="left:158px;top:102px;width:67px;height:19px;background:#1e1e1e;border:1px solid #3b3b3b"></div>
<div class="a" style="left:163.5px;top:105.5px;width:0;height:0;border-left:2.5px solid transparent;border-right:2.5px solid transparent;border-bottom:2.5px solid #7c7c7c"></div>
<div class="a" style="left:163.5px;top:114.5px;width:0;height:0;border-left:2.5px solid transparent;border-right:2.5px solid transparent;border-top:2.5px solid #7c7c7c"></div>
<div class="t " style="left:179px;top:104.5px;letter-spacing:-0.35px">0,00</div>
<div class="t " style="left:228px;top:104.5px;color:#cfcfcf">Y</div>
<div class="a" style="left:242px;top:102px;width:66px;height:19px;background:#1e1e1e;border:1px solid #3b3b3b"></div>
<div class="a" style="left:247.5px;top:105.5px;width:0;height:0;border-left:2.5px solid transparent;border-right:2.5px solid transparent;border-bottom:2.5px solid #7c7c7c"></div>
<div class="a" style="left:247.5px;top:114.5px;width:0;height:0;border-left:2.5px solid transparent;border-right:2.5px solid transparent;border-top:2.5px solid #7c7c7c"></div>
<div class="t " style="left:263px;top:104.5px;letter-spacing:-0.35px">0,00</div>
<div class="t " style="left:311px;top:104.5px;color:#cfcfcf">Z</div>
<div class="a" style="left:325px;top:102px;width:67px;height:19px;background:#1e1e1e;border:1px solid #3b3b3b"></div>
<div class="a" style="left:330.5px;top:105.5px;width:0;height:0;border-left:2.5px solid transparent;border-right:2.5px solid transparent;border-bottom:2.5px solid #7c7c7c"></div>
<div class="a" style="left:330.5px;top:114.5px;width:0;height:0;border-left:2.5px solid transparent;border-right:2.5px solid transparent;border-top:2.5px solid #7c7c7c"></div>
<div class="t " style="left:346px;top:104.5px;letter-spacing:-0.35px">0,00</div>
<div class="t r" style="left:-65px;width:200px;top:128.5px;">Scale</div>
<div class="t " style="left:144px;top:128.5px;color:#cfcfcf">X</div>
<div class="a" style="left:158px;top:126px;width:67px;height:19px;background:#1e1e1e;border:1px solid #3b3b3b"></div>
<div class="a" style="left:163.5px;top:129.5px;width:0;height:0;border-left:2.5px solid transparent;border-right:2.5px solid transparent;border-bottom:2.5px solid #7c7c7c"></div>
<div class="a" style="left:163.5px;top:138.5px;width:0;height:0;border-left:2.5px solid transparent;border-right:2.5px solid transparent;border-top:2.5px solid #7c7c7c"></div>
<div class="t " style="left:179px;top:128.5px;letter-spacing:-0.35px">1,00</div>
<div class="t " style="left:228px;top:128.5px;color:#cfcfcf">Y</div>
<div class="a" style="left:242px;top:126px;width:66px;height:19px;background:#1e1e1e;border:1px solid #3b3b3b"></div>
<div class="a" style="left:247.5px;top:129.5px;width:0;height:0;border-left:2.5px solid transparent;border-right:2.5px solid transparent;border-bottom:2.5px solid #7c7c7c"></div>
<div class="a" style="left:247.5px;top:138.5px;width:0;height:0;border-left:2.5px solid transparent;border-right:2.5px solid transparent;border-top:2.5px solid #7c7c7c"></div>
<div class="t " style="left:263px;top:128.5px;letter-spacing:-0.35px">1,00</div>
<div class="t " style="left:311px;top:128.5px;color:#cfcfcf">Z</div>
<div class="a" style="left:325px;top:126px;width:67px;height:19px;background:#1e1e1e;border:1px solid #3b3b3b"></div>
<div class="a" style="left:330.5px;top:129.5px;width:0;height:0;border-left:2.5px solid transparent;border-right:2.5px solid transparent;border-bottom:2.5px solid #7c7c7c"></div>
<div class="a" style="left:330.5px;top:138.5px;width:0;height:0;border-left:2.5px solid transparent;border-right:2.5px solid transparent;border-top:2.5px solid #7c7c7c"></div>
<div class="t " style="left:346px;top:128.5px;letter-spacing:-0.35px">1,00</div>
<div class="a" style="left:11px;top:153px;width:386px;height:205px;background:#2f2f2f;border:1px solid #4e4e4e;border-radius:7px 0 0 0"></div>
<div class="a" style="left:12px;top:154px;width:384px;height:21px;background:#484848;border-radius:6px 0 0 0"></div>
<div class="a" style="left:15px;top:156px;width:15px;height:15px;background:#2b2b2b;border-radius:6px"></div>
<div class="a" style="left:18.0px;top:161.0px;width:0;height:0;border-left:4.5px solid transparent;border-right:4.5px solid transparent;border-top:5px solid #e6e6e6"></div>
<div class="t b" style="left:36px;top:157px;color:#dedede">Animation</div>
<div class="a" style="left:379px;top:157.5px;width:12px;height:12px;border-radius:6px;background:#3a3a3a"></div>
<div class="t r" style="left:-65px;width:200px;top:182px;">Skeleton</div>
<div class="a" style="left:141px;top:179px;width:252px;height:19px;background:#1e1e1e;border:1px solid #3b3b3b"></div>
<div class="t " style="left:145px;top:182px;">human_skeleton</div>
<div class="a" style="left:380.0px;top:186.0px;width:0;height:0;border-left:4.5px solid transparent;border-right:4.5px solid transparent;border-top:5px solid #b4b4b4"></div>
<div class="t r" style="left:-65px;width:200px;top:204px;">Animation Filter</div>
<div class="a" style="left:141px;top:201px;width:252px;height:19px;background:#1e1e1e;border:1px solid #3b3b3b"></div>
<div class="t r" style="left:-65px;width:200px;top:226px;">Animation</div>
<div class="a" style="left:141px;top:223px;width:252px;height:19px;background:#1e1e1e;border:1px solid #3b3b3b"></div>
<div class="a" style="left:380.0px;top:230.0px;width:0;height:0;border-left:4.5px solid transparent;border-right:4.5px solid transparent;border-top:5px solid #b4b4b4"></div>
<div class="t " style="left:17px;top:248px;letter-spacing:-0.4px">Override face animat...</div>
<div class="cb" style="left:143px;top:246px"></div>
<div class="t r" style="left:-65px;width:200px;top:270px;color:#4c4c4c">Face Animation</div>
<div class="a" style="left:141px;top:267px;width:252px;height:19px;background:#2f2f2f;border:1px solid #3b3b3b"></div>
<div class="a" style="left:380.0px;top:274.0px;width:0;height:0;border-left:4.5px solid transparent;border-right:4.5px solid transparent;border-top:5px solid #9a9a9a"></div>
<div class="t " style="left:17px;top:292px;color:#4c4c4c;letter-spacing:-0.3px">Animation Control ...</div>
<div class="cb" style="left:143px;top:290px"></div>
<div class="t " style="left:155px;top:315.5px;color:#4c4c4c">Control Value (0.000)</div>
<div class="a" style="left:275px;top:318px;width:118px;height:8px;background:linear-gradient(#111,#2a2a2a);border-radius:4px;border:1px solid #3a3a3a"></div>
<div class="a" style="left:267px;top:313.5px;width:16px;height:16px;border-radius:8px;background:#5a5a5a"></div>
<div class="a" style="left:20.0px;top:336.0px;width:15.0px;height:15.0px;border-radius:7.5px;background:#3c3c3c"></div>
<div class="a" style="left:26.0px;top:339.0px;width:0;height:0;border-top:4.5px solid transparent;border-bottom:4.5px solid transparent;border-left:5px solid #e6e6e6"></div>
<div class="t b" style="left:41px;top:337px;color:#dedede">Blend</div>
<div class="a" style="left:373px;top:336.5px;width:14px;height:14px;border-radius:7px;border:1px solid #404040;background:#303030"></div>
<div class="a" style="left:16px;top:354px;width:377px;height:1px;background:#454545"></div>
<div class="a" style="left:11px;top:361px;width:386px;height:400px;background:#2f2f2f;border:1px solid #4e4e4e;border-radius:7px 0 0 0"></div>
<div class="a" style="left:12px;top:362px;width:384px;height:21px;background:#484848;border-radius:6px 0 0 0"></div>
<div class="a" style="left:15px;top:364px;width:15px;height:15px;background:#2b2b2b;border-radius:6px"></div>
<div class="a" style="left:18.0px;top:369.0px;width:0;height:0;border-left:4.5px solid transparent;border-right:4.5px solid transparent;border-top:5px solid #e6e6e6"></div>
<div class="t b" style="left:36px;top:365px;color:#dedede">Visual</div>
<div class="a" style="left:379px;top:365.5px;width:12px;height:12px;border-radius:6px;background:#3a3a3a"></div>
<div class="t r" style="left:-65px;width:200px;top:390px;">Female</div>
<div class="cb" style="left:143px;top:388px"></div>
<div class="t r" style="left:-65px;width:200px;top:412px;">Hide Body</div>
<div class="cb" style="left:143px;top:410px"></div>
<div class="t r" style="left:-65px;width:200px;top:434px;">Hide Hands</div>
<div class="cb" style="left:143px;top:432px"></div>
<div class="t r" style="left:-65px;width:200px;top:456px;">Hide Feet</div>
<div class="cb" style="left:143px;top:454px"></div>
<div class="a" style="left:20.5px;top:476.5px;width:15px;height:15px;background:#3c3c3c;border-radius:5px"></div>
<div class="a" style="left:23.5px;top:481.5px;width:0;height:0;border-left:4.5px solid transparent;border-right:4.5px solid transparent;border-top:5px solid #e6e6e6"></div>
<div class="t b" style="left:41px;top:477px;color:#dedede">Body parts</div>
<div class="a" style="left:373px;top:477px;width:14px;height:14px;border-radius:7px;border:1px solid #404040;background:#303030"></div>
<div class="a" style="left:24px;top:501px;width:64px;height:64px;background:#464646"></div>
<div class="a" style="left:24px;top:552px;width:0;height:0;border-bottom:13px solid #b0127a;border-right:13px solid transparent"></div>
<div class="a" style="left:92px;top:501px;width:292px;height:27px;border:1px solid #474747;border-radius:3px;background:#303030"></div>
<div class="t b" style="left:96px;top:507.5px;color:#dedede">Body</div>
<div class="a" style="left:346px;top:505px;width:37px;height:19px;border:1px solid #4a4a4a;border-radius:4px;background:#343434"></div>
<div class="t c" style="left:346px;top:507.5px;width:37px;">Go To</div>
<div class="a" style="left:92px;top:535px;width:278px;height:22px;background:#1e1e1e;border:1px solid #3b3b3b"></div>
<div class="t c" style="left:92px;top:539px;width:268px;">ba_platearmor</div>
<svg class="a" style="left:370px;top:539px" width="14" height="14" viewBox="0 0 14 14"><circle cx="7" cy="7" r="6.3" fill="#8e8e8e"/><path d="M4.3 4.3L9.7 9.7M9.7 4.3L4.3 9.7" stroke="#2e2e2e" stroke-width="1.3"/></svg>
<div class="a" style="left:20px;top:568px;width:368px;height:1px;background:#474747"></div>
<div class="a" style="left:24px;top:573px;width:64px;height:64px;background:#464646"></div>
<div class="t c" style="left:24px;top:598px;width:64px;font-size:9.5px;color:#bdbdbd">MESH</div>
<div class="a" style="left:24px;top:624px;width:0;height:0;border-bottom:13px solid #b0127a;border-right:13px solid transparent"></div>
<div class="a" style="left:92px;top:573px;width:292px;height:27px;border:1px solid #474747;border-radius:3px;background:#303030"></div>
<div class="t b" style="left:96px;top:579.5px;color:#dedede">Head</div>
<div class="a" style="left:346px;top:577px;width:37px;height:19px;border:1px solid #4a4a4a;border-radius:4px;background:#343434"></div>
<div class="t c" style="left:346px;top:579.5px;width:37px;">Go To</div>
<div class="a" style="left:92px;top:607px;width:278px;height:22px;background:#1e1e1e;border:1px solid #3b3b3b"></div>
<div class="t c" style="left:92px;top:611px;width:268px;">None</div>
<svg class="a" style="left:370px;top:611px" width="14" height="14" viewBox="0 0 14 14"><circle cx="7" cy="7" r="6.3" fill="#8e8e8e"/><path d="M4.3 4.3L9.7 9.7M9.7 4.3L4.3 9.7" stroke="#2e2e2e" stroke-width="1.3"/></svg>
<div class="a" style="left:20px;top:640px;width:368px;height:1px;background:#474747"></div>
<div class="a" style="left:24px;top:645px;width:64px;height:64px;background:#464646"></div>
<div class="t c" style="left:24px;top:670px;width:64px;font-size:9.5px;color:#bdbdbd">MESH</div>
<div class="a" style="left:92px;top:645px;width:292px;height:27px;border:1px solid #474747;border-radius:3px;background:#303030"></div>
<div class="t b" style="left:96px;top:651.5px;color:#dedede">Shoulders</div>
<div class="a" style="left:346px;top:649px;width:37px;height:19px;border:1px solid #4a4a4a;border-radius:4px;background:#343434"></div>
<div class="t c" style="left:346px;top:651.5px;width:37px;">Go To</div>
<div class="a" style="left:92px;top:679px;width:278px;height:22px;background:#1e1e1e;border:1px solid #3b3b3b"></div>
<div class="t c" style="left:92px;top:683px;width:268px;">None</div>
<svg class="a" style="left:370px;top:683px" width="14" height="14" viewBox="0 0 14 14"><circle cx="7" cy="7" r="6.3" fill="#8e8e8e"/><path d="M4.3 4.3L9.7 9.7M9.7 4.3L4.3 9.7" stroke="#2e2e2e" stroke-width="1.3"/></svg>
<div class="a" style="left:20px;top:712px;width:368px;height:1px;background:#474747"></div>
</div>

</body></html>
